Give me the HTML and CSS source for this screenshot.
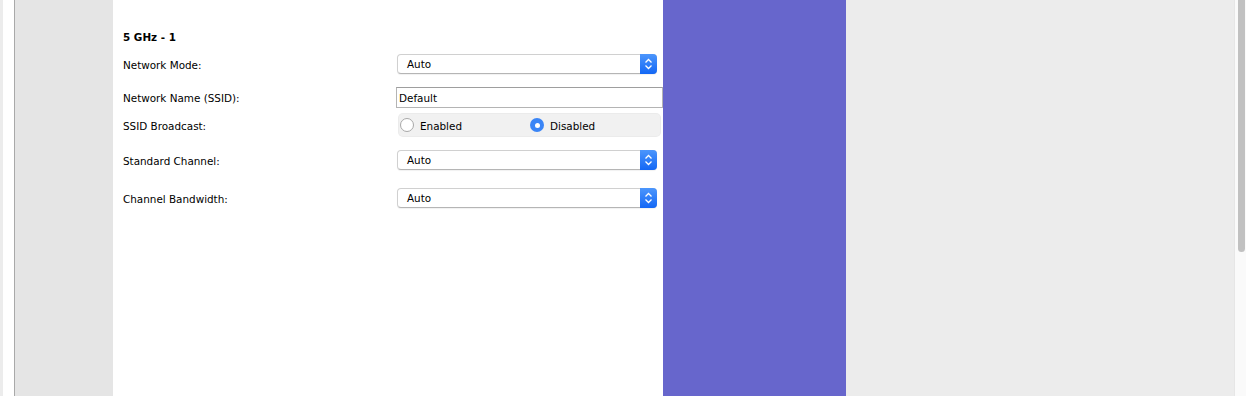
FILE: index.html
```html
<!DOCTYPE html>
<html>
  <head>
    <meta charset="utf-8">
    <title>Wireless Settings - 5 GHz</title>
    <link rel="stylesheet" href="styles.css">
  </head>
  <body>
    <div class="edge"></div>
    <div class="gutter"></div>
    <div class="sidebar"></div>

    <div class="main">
      <h3 class="section-title">5 GHz - 1</h3>

      <div class="row row-mode">
        <label>Network Mode:</label>
        <div class="select">
          <span>Auto</span>
          <span class="select-arrows">
            <svg width="9" height="12" viewBox="0 0 9 12"><path d="M1.5 4.5 L4.5 1.5 L7.5 4.5 M1.5 7.5 L4.5 10.5 L7.5 7.5" fill="none" stroke="#fff" stroke-width="1.3"/></svg>
          </span>
        </div>
      </div>

      <div class="row row-ssid">
        <label>Network Name (SSID):</label>
        <div class="text-input">Default</div>
      </div>

      <div class="row row-broadcast">
        <label>SSID Broadcast:</label>
        <div class="radio-group">
          <div class="radio-option"><span class="radio"></span><span class="radio-label">Enabled</span></div>
          <div class="radio-option"><span class="radio checked"></span><span class="radio-label">Disabled</span></div>
        </div>
      </div>

      <div class="row row-channel">
        <label>Standard Channel:</label>
        <div class="select">
          <span>Auto</span>
          <span class="select-arrows">
            <svg width="9" height="12" viewBox="0 0 9 12"><path d="M1.5 4.5 L4.5 1.5 L7.5 4.5 M1.5 7.5 L4.5 10.5 L7.5 7.5" fill="none" stroke="#fff" stroke-width="1.3"/></svg>
          </span>
        </div>
      </div>

      <div class="row row-bandwidth">
        <label>Channel Bandwidth:</label>
        <div class="select">
          <span>Auto</span>
          <span class="select-arrows">
            <svg width="9" height="12" viewBox="0 0 9 12"><path d="M1.5 4.5 L4.5 1.5 L7.5 4.5 M1.5 7.5 L4.5 10.5 L7.5 7.5" fill="none" stroke="#fff" stroke-width="1.3"/></svg>
          </span>
        </div>
      </div>
    </div>

    <div class="accent"></div>
    <div class="backdrop"></div>
    <div class="scrollbar"><div class="thumb"></div></div>
  </body>
</html>
```

FILE: styles.css
```css
html, body {
  height: 100%;
}

body {
  margin: 0;
  display: flex;
  overflow: hidden;
  background: #ececec;
  font-family: "DejaVu Sans", "Liberation Sans", sans-serif;
  font-size: 10.4px;
  color: #000;
}

.edge {
  width: 3px;
  background: #ececec;
}

.gutter {
  width: 11px;
  background: #fff;
}

.sidebar {
  width: 98px;
  background: #e5e5e5;
  border-left: 1px solid #a9a9a9;
}

.main {
  width: 540px;
  padding: 30px 0 0 10px;
  background: #fff;
}

.section-title {
  margin: 0;
  font-size: 10.4px;
  font-weight: bold;
  line-height: 14px;
}

.row {
  display: grid;
  grid-template-columns: 274px 266px;
  align-items: center;
}

.row label {
  line-height: 14px;
  padding-top: 1px;
}

.row-mode { margin-top: 10px; }
.row-ssid { margin-top: 13px; }
.row-broadcast { margin-top: 6px; }
.row-channel { margin-top: 14px; }
.row-bandwidth { margin-top: 18px; }

.select {
  width: 260px;
  height: 20px;
  box-sizing: border-box;
  display: flex;
  align-items: center;
  justify-content: space-between;
  border: 1px solid #d0d0d0;
  border-bottom-color: #b5b5b5;
  border-radius: 4px;
  background: #fff;
  box-shadow: 0 1px 1px rgba(0, 0, 0, 0.06);
}

.select span:first-child {
  padding-left: 9px;
}

.select-arrows {
  width: 17px;
  height: 20px;
  margin: -1px -1px -1px 0;
  display: flex;
  align-items: center;
  justify-content: center;
  border-radius: 0 4px 4px 0;
  background: linear-gradient(#4c96fc, #1367f5);
}

.text-input {
  width: 267px;
  height: 21px;
  margin-left: -1px;
  box-sizing: border-box;
  padding: 1px 2px 0;
  line-height: 19px;
  border: 1px solid #b4b4b4;
  border-top-color: #9e9e9e;
}

.radio-group {
  width: 261px;
  height: 22px;
  margin-left: 2px;
  display: grid;
  grid-template-columns: 130px 1fr;
  align-items: center;
  background: #f1f1f1;
  border-radius: 4px;
  box-shadow: 0 0 0 1px #ebebeb;
}

.radio-option {
  display: flex;
  align-items: center;
  gap: 6px;
  padding-left: 1px;
}

.radio-label {
  padding-top: 2px;
}

.radio {
  width: 14px;
  height: 14px;
  box-sizing: border-box;
  border: 1px solid #a8a8a8;
  border-radius: 50%;
  background: #fff;
  display: flex;
  align-items: center;
  justify-content: center;
}

.radio.checked {
  border: none;
  background: #3a85f6;
}

.radio.checked::after {
  content: "";
  width: 5px;
  height: 5px;
  border-radius: 50%;
  background: #fff;
}

.accent {
  width: 183px;
  background: #6766cc;
}

.backdrop {
  flex: 1;
  background: #ececec;
}

.scrollbar {
  width: 12px;
  box-sizing: border-box;
  background: #fafafa;
  border-left: 1px solid #e6e6e6;
  padding: 0 1px 0 3px;
}

.thumb {
  width: 7px;
  height: 252px;
  background: #c1c1c1;
  border-radius: 0 0 4px 4px;
}
```
